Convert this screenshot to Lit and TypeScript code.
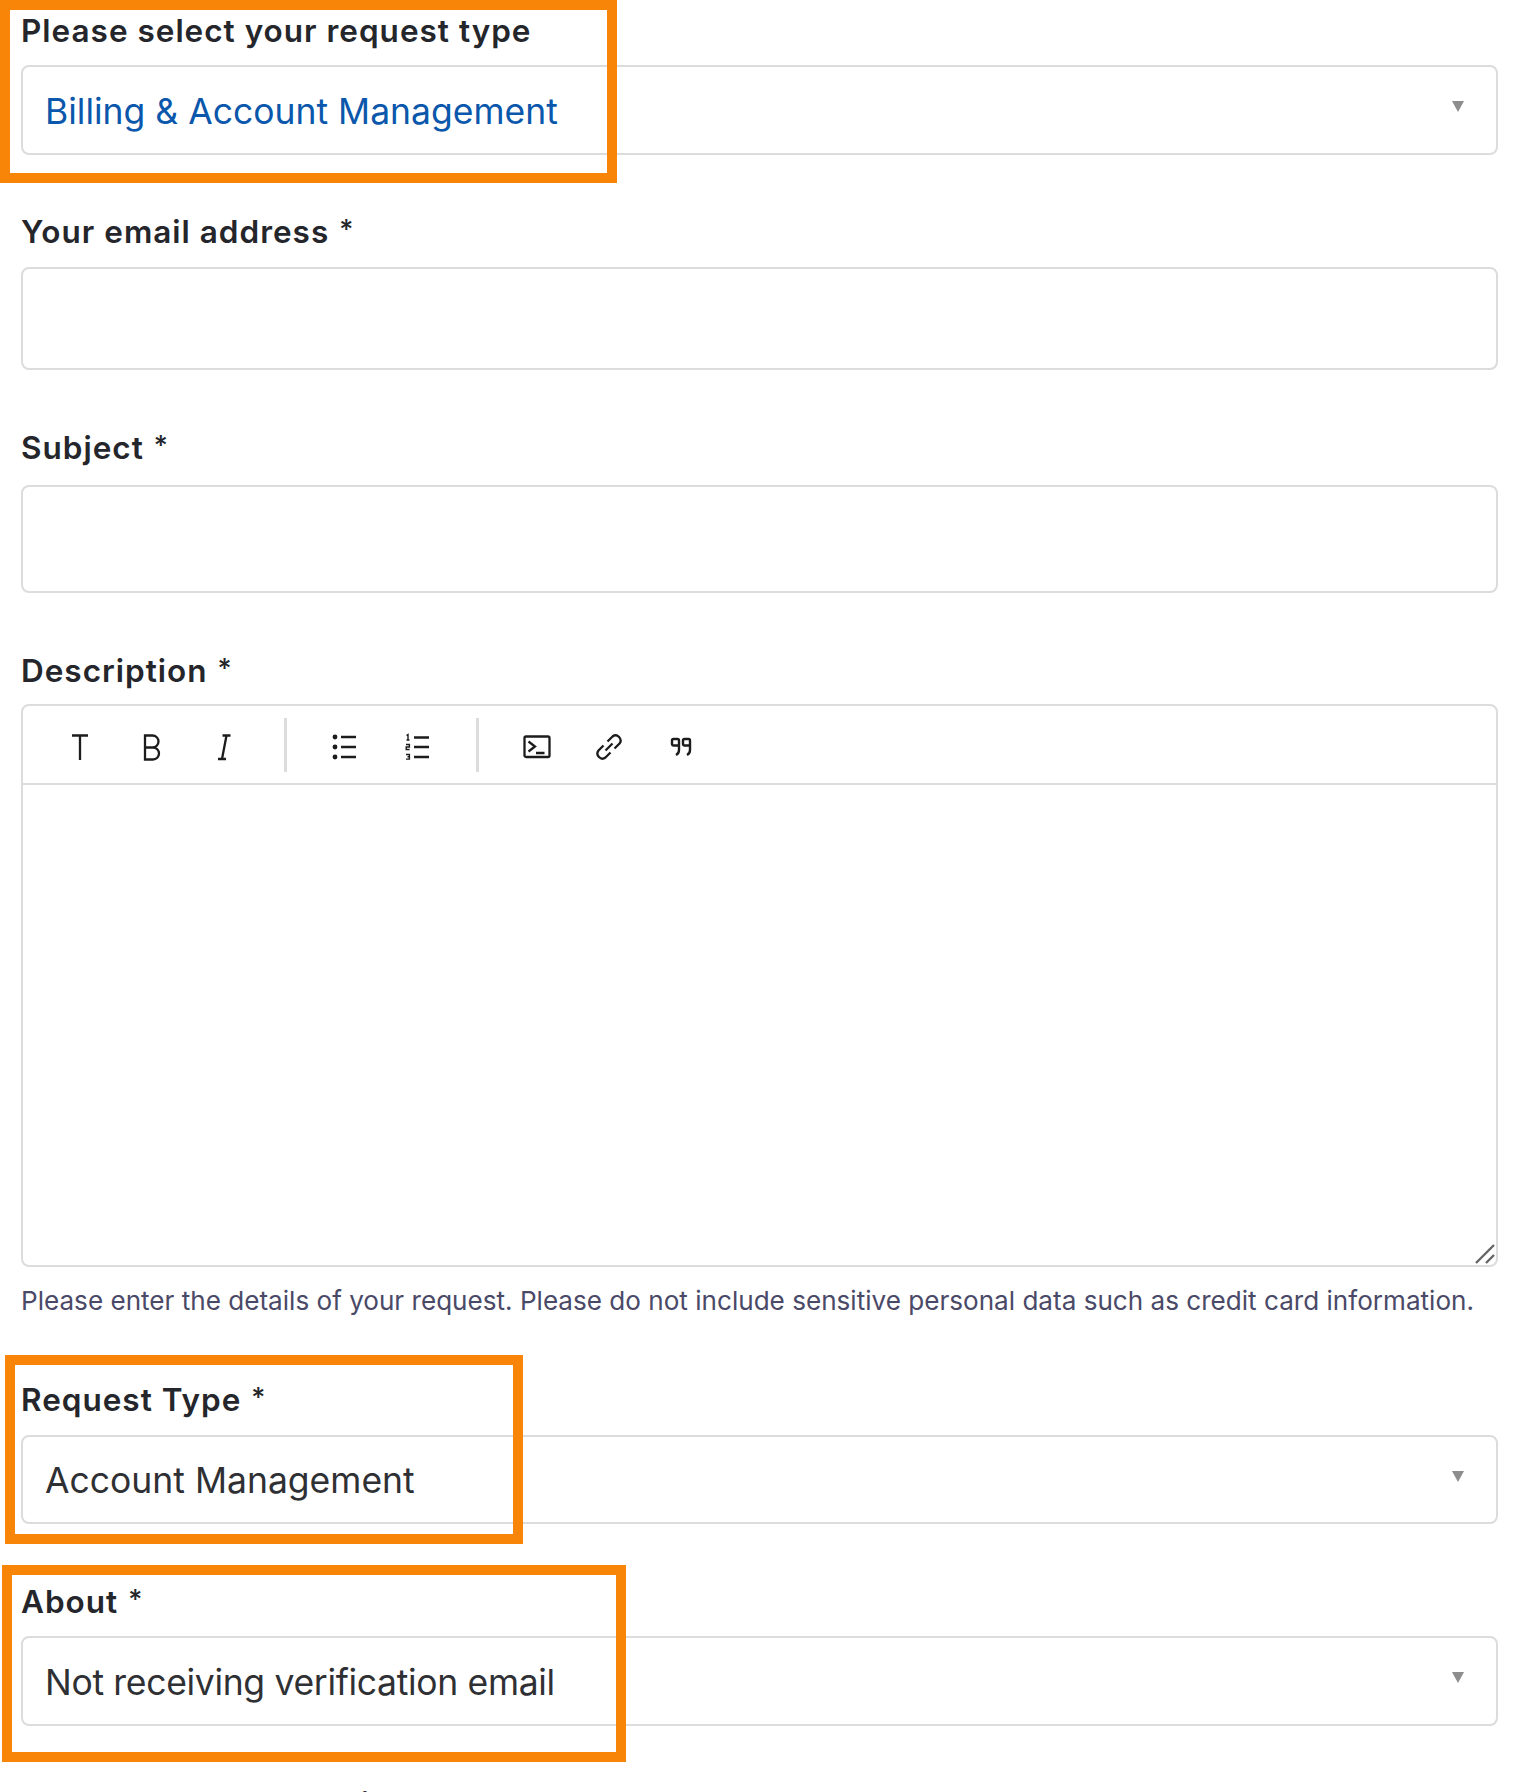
import { LitElement, html, css, svg } from "lit"
import { customElement } from "lit/decorators.js"

const caret = html`<svg class="caret" width="12" height="11" viewBox="0 0 12 11"><path d="M0 0h12L6 11z" fill="#8d8d8d"/></svg>`

@customElement("app-root")
export class AppRoot extends LitElement {
  static styles = css`
    :host {
      display: block;
      position: relative;
      height: 1792px;
      overflow: hidden;
      background: #fff;
      font-family: Inter, "Liberation Sans", sans-serif;
      color: #222;
    }

    .form {
      display: flex;
      flex-direction: column;
      padding: 0 28px 0 21px;
    }

    .label {
      height: 36px;
      line-height: 32px;
      font-size: 31.5px;
      font-weight: 600;
      letter-spacing: 1px;
      color: #24262b;
      white-space: nowrap;
      flex: none;
    }

    .req {
      margin-left: 10px;
      font-size: 27px;
      font-weight: 500;
      letter-spacing: 0;
      vertical-align: 4px;
    }

    .field {
      box-sizing: border-box;
      border: 2px solid #dcdcdc;
      border-radius: 8px;
      background: #fff;
      flex: none;
    }

    .select {
      display: flex;
      align-items: center;
      justify-content: space-between;
      height: 89px;
      padding: 2px 32px 0 22px;
      font-size: 35.5px;
      color: #2f3034;
      white-space: nowrap;
    }

    .select.blue {
      height: 90px;
      color: #0a57ab;
    }

    .select.tight {
      height: 90px;
      letter-spacing: -0.32px;
    }

    .caret {
      margin-bottom: 9px;
    }

    .input-a {
      margin-top: 17px;
      height: 103px;
    }

    .input-b {
      margin-top: 19px;
      height: 108px;
    }

    .editor {
      margin-top: 15px;
      height: 563px;
      display: flex;
      flex-direction: column;
    }

    .toolbar {
      display: flex;
      align-items: center;
      height: 79px;
      flex: none;
      box-sizing: border-box;
      border-bottom: 2px solid #dcdcdc;
      padding: 0 0 0 21px;
    }

    .tool {
      width: 72px;
      height: 54px;
      padding-top: 4px;
      box-sizing: border-box;
      display: flex;
      align-items: center;
      justify-content: center;
      flex: none;
    }

    .sep {
      width: 3px;
      height: 54px;
      background: #dcdcdc;
      margin: 0 22px 0 23.5px;
      flex: none;
    }

    .body {
      flex: 1;
      position: relative;
    }

    .grip {
      position: absolute;
      right: 0;
      bottom: 0;
    }

    .hint {
      margin-top: 17px;
      font-size: 26.1px;
      line-height: 34px;
      color: #4a4a68;
      white-space: nowrap;
    }

    .mark {
      position: absolute;
      box-sizing: border-box;
      border: 10px solid #f88508;
    }

    .mark.a {
      left: 0;
      top: 0;
      width: 617px;
      height: 183px;
    }

    .mark.b {
      left: 5px;
      top: 1355px;
      width: 518px;
      height: 189px;
    }

    .mark.c {
      left: 2px;
      top: 1565px;
      width: 624px;
      height: 197px;
    }
  `

  private label(text: string, required: boolean, top: number) {
    return html`<div class="label" style="margin-top:${top}px">
      ${text}${required ? html`<span class="req">*</span>` : ""}
    </div>`
  }

  private select(value: string, top: number, variant = "") {
    return html`<div class="field select ${variant}" style="margin-top:${top}px">
      <span>${value}</span>${caret}
    </div>`
  }

  render() {
    return html`
      <div class="form">
        ${this.label("Please select your request type", false, 15)}
        ${this.select("Billing & Account Management", 14, "blue")}
        ${this.label("Your email address", true, 59)}
        <div class="field input-a"></div>
        ${this.label("Subject", true, 60)}
        <div class="field input-b"></div>
        ${this.label("Description", true, 60)}
        <div class="field editor">
          <div class="toolbar">
            <div class="tool">${icons.text}</div>
            <div class="tool">${icons.bold}</div>
            <div class="tool">${icons.italic}</div>
            <div class="sep"></div>
            <div class="tool">${icons.bullets}</div>
            <div class="tool">${icons.numbers}</div>
            <div class="sep"></div>
            <div class="tool">${icons.code}</div>
            <div class="tool">${icons.link}</div>
            <div class="tool">${icons.quote}</div>
          </div>
          <div class="body">
            <svg class="grip" width="24" height="24" viewBox="0 0 24 24" fill="none" stroke="#666" stroke-width="2.4">
              <path d="M4 22 22 4M14 22l8-8"/>
            </svg>
          </div>
        </div>
        <div class="hint">
          Please enter the details of your request. Please do not include sensitive personal data such as credit card information.
        </div>
        ${this.label("Request Type", true, 64)}
        ${this.select("Account Management", 17)}
        ${this.label("About", true, 60)}
        ${this.select("Not receiving verification email", 16, "tight")}
        ${this.label("Current account email", false, 62)}
      </div>
      <div class="mark a"></div>
      <div class="mark b"></div>
      <div class="mark c"></div>
    `
  }
}

const icon = (body: unknown) =>
  html`<svg width="28" height="28" viewBox="0 0 28 28" fill="none" stroke="#1c1c1c" stroke-width="2.3">${body}</svg>`

const icons = {
  text: icon(svg`<path d="M6 2.500h16M14 2.500V27"/>`),
  bold: icon(svg`<path d="M7 2.500h7.500a6 6 0 0 1 0 12H7zM7 14.500h8a6 6 0 0 1 0 12H7z"/>`),
  italic: icon(svg`<path d="M12.500 2.500h8M8 26h8M16.500 2.500 12 26"/>`),
  bullets: icon(svg`
    <circle cx="4" cy="4" r="2.400" fill="#1c1c1c" stroke="none"/>
    <circle cx="4" cy="14" r="2.400" fill="#1c1c1c" stroke="none"/>
    <circle cx="4" cy="24" r="2.400" fill="#1c1c1c" stroke="none"/>
    <path d="M10 4h15M10 14h15M10 24h15"/>`),
  numbers: icon(svg`
    <path d="M11 4.500h15M11 14h15M11 24h15"/>
    <path stroke-width="1.400" d="M3.500 2.500 5 1.500v5.500M3.500 7h3M3 11.500h3.400v2.500H3.200v2.500h3.400M3 21.500h3.400v2.200H4.500m1.900 0v2.400H3"/>`),
  code: icon(svg`
    <rect x="1.500" y="3.500" width="25" height="20.500" rx="1.500"/>
    <path d="M5.500 8.500l6.500 5-6.500 5M13 20h8.500"/>`),
  link: icon(svg`
    <path d="M10.500 17.500 17.500 10.500"/>
    <path d="M8.500 12.500 3.500 17.500a5 5 0 0 0 7 7L15.500 19.500"/>
    <path d="M19.500 15.500 24.500 10.500a5 5 0 0 0-7-7L12.500 8.500"/>`),
  quote: icon(svg`
    <path stroke-width="2.400" d="M12 12.500H6.500a1.500 1.500 0 0 1-1.500-1.500V7.500a1.500 1.500 0 0 1 1.500-1.500h4a1.500 1.500 0 0 1 1.500 1.500V17c0 2.500-1 4-3 5"/>
    <path stroke-width="2.400" d="M23 12.500H17.500a1.500 1.500 0 0 1-1.500-1.500V7.500a1.500 1.500 0 0 1 1.500-1.500h4a1.500 1.500 0 0 1 1.500 1.500V17c0 2.500-1 4-3 5"/>`),
}
